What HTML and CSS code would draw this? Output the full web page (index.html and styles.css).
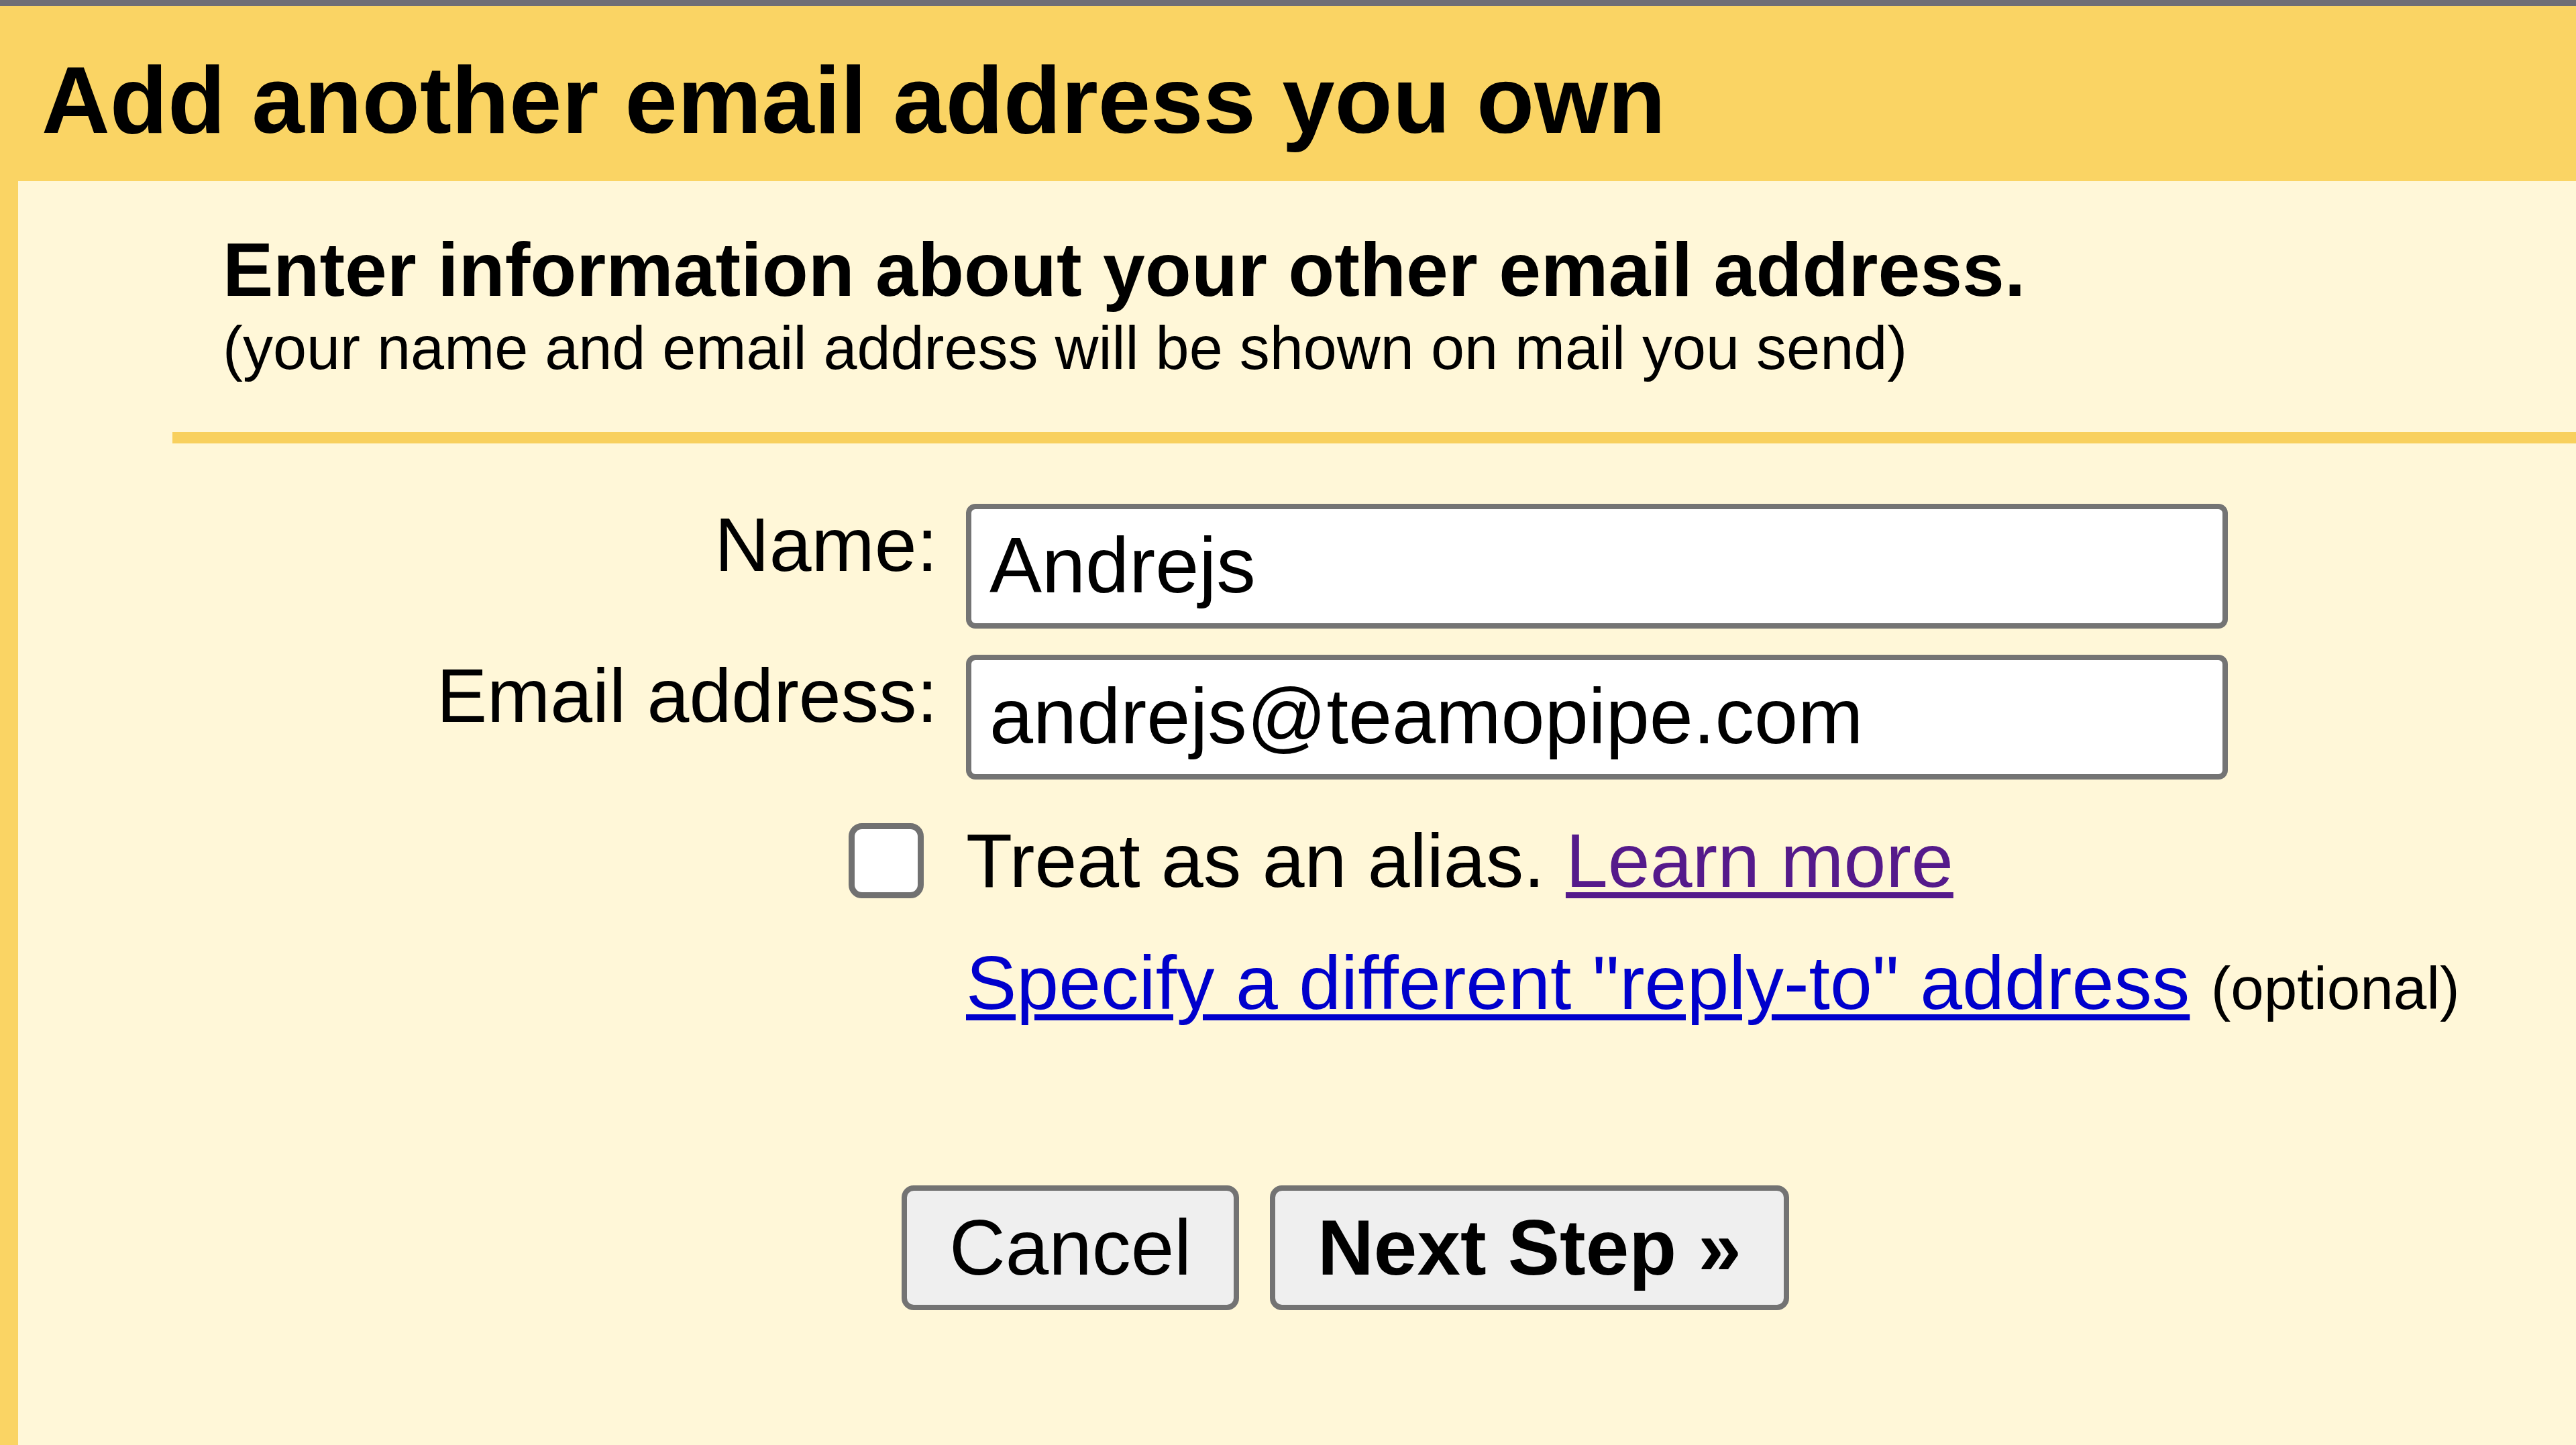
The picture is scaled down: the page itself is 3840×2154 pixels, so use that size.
FILE: index.html
```html
<!DOCTYPE html>
<html lang="en">
<head>
    <meta charset="UTF-8">
    <meta name="viewport" content="width=device-width, initial-scale=1.0">
    <title>Add another email address you own</title>
    <link rel="stylesheet" href="styles.css">
</head>
<body>
    <div class="chrome"></div>

    <div class="header">
        <h1>Add another email address you own</h1>
    </div>

    <div class="frame">
        <div class="content">
            <div class="intro">
                <div class="intro-title">Enter information about your other email address.</div>
                <div class="intro-note">(your name and email address will be shown on mail you send)</div>
            </div>

            <div class="rule"></div>

            <div class="fields">
                <label class="field-label" for="name">Name:</label>
                <input class="field-input" type="text" id="name" value="Andrejs">

                <label class="field-label" for="email">Email address:</label>
                <input class="field-input" type="text" id="email" value="andrejs@teamopipe.com">

                <input class="alias-box" type="checkbox" id="alias">
                <div class="alias-text">Treat as an alias. <a href="#" class="visited">Learn more</a></div>

                <div class="reply-to"><a href="#">Specify a different "reply-to" address</a> <span class="optional">(optional)</span></div>
            </div>

            <div class="actions">
                <button class="btn">Cancel</button>
                <button class="btn btn-next">Next Step &raquo;</button>
            </div>
        </div>
    </div>
</body>
</html>
```

FILE: styles.css
```css
html, body {
    margin: 0;
    padding: 0;
}
body {
    background: #fad464;
    color: #000;
    font-family: "Liberation Sans", Arial, sans-serif;
    font-size: 113px;
    min-height: 2154px;
    display: flex;
    flex-direction: column;
}
.chrome {
    height: 9px;
    background: #6f6e76;
}
.header {
    background: #fad464;
    padding: 69px 0 49px 62px;
}
.header h1 {
    margin: 0;
    font-size: 141px;
    line-height: 143px;
    font-weight: bold;
}
.frame {
    flex: 1;
    display: flex;
    padding-left: 27px;
}
.content {
    flex: 1;
    background: #fff7d8;
}
.intro {
    padding: 67px 0 0 305px;
}
.intro-title {
    font-size: 113px;
    font-weight: bold;
    line-height: 130px;
}
.intro-note {
    font-size: 90px;
    line-height: 104px;
}
.rule {
    margin: 73px 0 0 230px;
    height: 17px;
    background: #f8d05e;
}
.fields {
    display: grid;
    grid-template-columns: 1371px 1881px;
    column-gap: 42px;
    row-gap: 39px;
    margin-top: 90px;
    align-items: center;
}
.field-label {
    text-align: right;
    line-height: 122px;
    align-self: start;
}
.field-input {
    box-sizing: border-box;
    width: 1881px;
    height: 186px;
    margin: 0;
    padding: 0 0 4px 27px;
    border: 8px solid #747474;
    border-radius: 14px;
    background: #fff;
    font-family: "Liberation Sans", Arial, sans-serif;
    font-size: 117px;
    color: #000;
    outline: none;
}
.alias-box {
    appearance: none;
    -webkit-appearance: none;
    box-sizing: border-box;
    justify-self: end;
    width: 112px;
    height: 112px;
    margin: 26px 21px 26px 0;
    border: 9px solid #717171;
    border-radius: 20px;
    background: #fff;
}
.alias-text {
    line-height: 122px;
}
.reply-to {
    grid-column: 2;
    line-height: 122px;
    white-space: nowrap;
}
a {
    color: #0000cc;
    text-decoration-thickness: 9px;
    text-underline-offset: 8px;
}
a.visited {
    color: #551a8b;
}
.optional {
    font-size: 89px;
}
.actions {
    display: flex;
    gap: 46px;
    margin-top: 233px;
    padding-left: 1317px;
}
.btn {
    box-sizing: border-box;
    height: 186px;
    padding: 0 63px;
    border: 8px solid #737373;
    border-radius: 18px;
    background: #efefef;
    font-family: "Liberation Sans", Arial, sans-serif;
    font-size: 116px;
    color: #000;
    cursor: pointer;
}
.btn-next {
    font-weight: bold;
}
```
